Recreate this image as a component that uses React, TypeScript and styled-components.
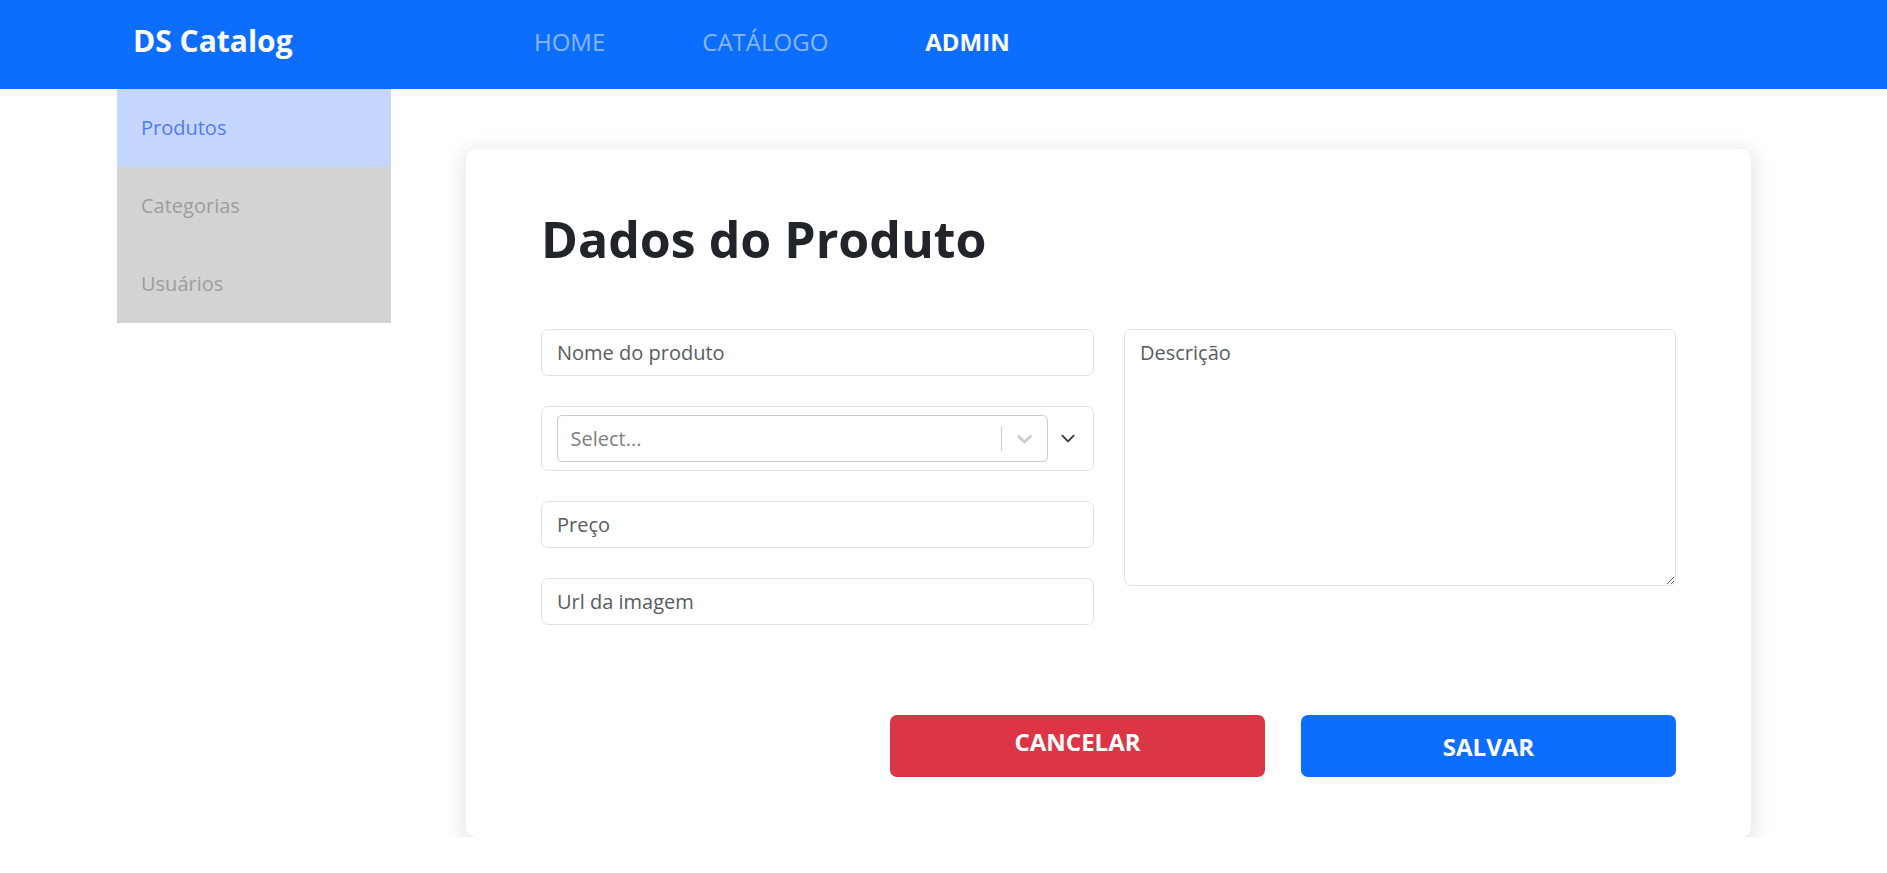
import React from "react";
import styled, { createGlobalStyle } from "styled-components";

const GlobalStyle = createGlobalStyle`
  * { box-sizing: border-box; }
  html, body { margin: 0; padding: 0; background: #ffffff; }
  body { font-family: "Open Sans", "Noto Sans", sans-serif; color: #212529; }
`;

const Navbar = styled.header`
  height: 89px;
  background: #0d6efd;
  display: flex;
  align-items: flex-start;
  padding: 23px 0 0 133px;
`;

const Brand = styled.div`
  width: 401px;
  flex-shrink: 0;
  font-size: 30px;
  line-height: 1.2;
  font-weight: 700;
  color: #ffffff;
`;

const NavList = styled.nav`
  display: flex;
  gap: 97px;
  padding-top: 1px;
`;

const NavLink = styled.a<{ $active?: boolean }>`
  font-size: 24px;
  line-height: 1.5;
  font-weight: ${(p) => (p.$active ? 700 : 400)};
  color: ${(p) => (p.$active ? "#ffffff" : "rgba(255,255,255,0.5)")};
  text-decoration: none;
  text-transform: uppercase;
`;

const Main = styled.div`
  display: flex;
  align-items: flex-start;
  padding-left: 117px;
`;

const Sidebar = styled.aside`
  width: 274px;
  flex-shrink: 0;
  display: flex;
  flex-direction: column;
`;

const SideItem = styled.a<{ $active?: boolean }>`
  height: 78px;
  display: flex;
  align-items: center;
  padding: 0 0 1px 24px;
  font-size: 20px;
  background: ${(p) => (p.$active ? "#c5d7fe" : "#d3d3d3")};
  color: ${(p) => (p.$active ? "#4f7cf5" : "#9d9d9d")};
  text-decoration: none;
`;

const Content = styled.main`
  padding: 60px 0 0 75px;
`;

const Card = styled.section`
  width: 1285px;
  background: #ffffff;
  border-radius: 10px;
  box-shadow: 0 4px 20px 4px rgba(0, 0, 0, 0.1);
  padding: 60px 75px 60px;
`;

const Title = styled.h1`
  margin: 0 0 60px;
  font-size: 50px;
  line-height: 1.2;
  font-weight: 700;
  color: #212529;
`;

const FormGrid = styled.div`
  display: grid;
  grid-template-columns: 553px 552px;
  column-gap: 30px;
  align-items: start;
`;

const Column = styled.div`
  display: flex;
  flex-direction: column;
  gap: 30px;
`;

const Input = styled.input`
  width: 100%;
  height: 47px;
  padding: 7.5px 15px;
  font-family: "Open Sans", sans-serif;
  font-size: 20px;
  line-height: 30px;
  color: #212529;
  border: 1px solid #dee2e6;
  border-radius: 7px;
  outline: none;
  &::placeholder { color: #595c5f; }
`;

const TextArea = styled.textarea`
  width: 100%;
  height: 257px;
  padding: 7.5px 15px;
  font-family: "Open Sans", sans-serif;
  font-size: 20px;
  line-height: 30px;
  color: #212529;
  border: 1px solid #dee2e6;
  border-radius: 7px;
  resize: vertical;
  outline: none;
  &::placeholder { color: #595c5f; }
`;

const SelectWrap = styled.div`
  height: 65px;
  display: flex;
  align-items: center;
  padding: 0 15px;
  gap: 10px;
  border: 1px solid #dee2e6;
  border-radius: 7px;
`;

const SelectControl = styled.div`
  flex: 1;
  height: 47px;
  display: flex;
  align-items: center;
  border: 1px solid #cccccc;
  border-radius: 5px;
  background: #ffffff;
`;

const SelectValue = styled.div`
  flex: 1;
  padding: 0 12.5px;
  font-size: 20px;
  color: #808080;
`;

const Separator = styled.span`
  width: 1px;
  align-self: stretch;
  margin: 10px 0;
  background: #cccccc;
`;

const Indicator = styled.div`
  display: flex;
  align-items: center;
  padding: 0 10px;
  color: #cccccc;
`;

const OuterArrow = styled.div`
  width: 20px;
  height: 15px;
  display: flex;
  align-items: center;
  justify-content: center;
`;

const Actions = styled.div`
  display: flex;
  justify-content: flex-end;
  gap: 36px;
  margin-top: 90px;
`;

const Button = styled.button<{ $variant: "danger" | "primary"; $raised?: boolean }>`
  width: 375px;
  height: 62px;
  border: none;
  border-radius: 7px;
  display: flex;
  align-items: center;
  justify-content: center;
  padding: 0 0 ${(p) => (p.$raised ? "10px" : "0")};
  font-family: "Open Sans", sans-serif;
  font-size: 24px;
  font-weight: 700;
  color: #ffffff;
  background: ${(p) => (p.$variant === "danger" ? "#dc3545" : "#0d6efd")};
  text-transform: uppercase;
  cursor: pointer;
`;

export default function App() {
  return (
    <>
      <GlobalStyle />
      <Navbar>
        <Brand>DS Catalog</Brand>
        <NavList>
          <NavLink href="#">HOME</NavLink>
          <NavLink href="#">CATÁLOGO</NavLink>
          <NavLink href="#" $active>
            ADMIN
          </NavLink>
        </NavList>
      </Navbar>
      <Main>
        <Sidebar>
          <SideItem href="#" $active>
            Produtos
          </SideItem>
          <SideItem href="#">Categorias</SideItem>
          <SideItem href="#">Usuários</SideItem>
        </Sidebar>
        <Content>
          <Card>
            <Title>Dados do Produto</Title>
            <FormGrid>
              <Column>
                <Input placeholder="Nome do produto" />
                <SelectWrap>
                  <SelectControl>
                    <SelectValue>Select...</SelectValue>
                    <Separator />
                    <Indicator>
                      <svg width="25" height="25" viewBox="0 0 20 20" fill="currentColor">
                        <path d="M4.516 7.548c0.436-0.446 1.043-0.481 1.576 0l3.908 3.747 3.908-3.747c0.533-0.481 1.141-0.446 1.574 0 0.436 0.445 0.408 1.197 0 1.615-0.406 0.418-4.695 4.502-4.695 4.502-0.217 0.223-0.502 0.335-0.787 0.335s-0.57-0.112-0.789-0.335c0 0-4.287-4.084-4.695-4.502s-0.436-1.17 0-1.615z" />
                      </svg>
                    </Indicator>
                  </SelectControl>
                  <OuterArrow>
                    <svg width="20" height="15" viewBox="0 0 16 16" fill="none">
                      <path d="m2 5 6 6 6-6" stroke="#343a40" strokeWidth="2" strokeLinecap="round" strokeLinejoin="round" />
                    </svg>
                  </OuterArrow>
                </SelectWrap>
                <Input placeholder="Preço" />
                <Input placeholder="Url da imagem" />
              </Column>
              <Column>
                <TextArea placeholder="Descrição" />
              </Column>
            </FormGrid>
            <Actions>
              <Button $variant="danger" $raised>
                Cancelar
              </Button>
              <Button $variant="primary">Salvar</Button>
            </Actions>
          </Card>
        </Content>
      </Main>
    </>
  );
}
